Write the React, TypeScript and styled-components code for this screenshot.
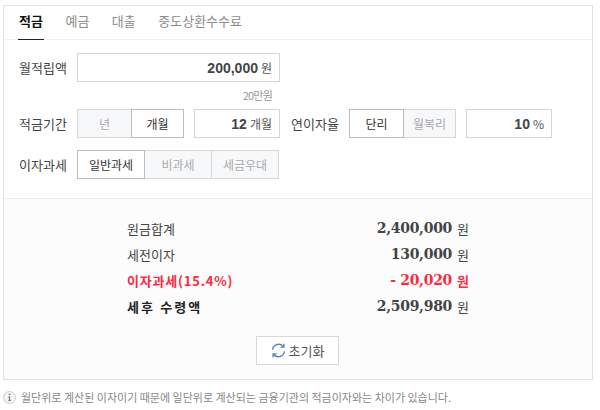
import styled, { createGlobalStyle } from 'styled-components';

const GlobalStyle = createGlobalStyle`
    html, body {
        margin: 0;
        padding: 0;
        background: #fff;
    }
    body {
        font-family: "Noto Sans CJK KR", "Noto Sans", sans-serif;
        color: #333;
    }
`;

const Page = styled.div`
    width: 600px;
    height: 410px;
    padding: 5px 0 0 3px;
    box-sizing: border-box;
    overflow: hidden;
`;

const Panel = styled.div`
    width: 590px;
    height: 375px;
    box-sizing: border-box;
    border: 1px solid #e2e2e2;
    display: flex;
    flex-direction: column;
`;

const Tabs = styled.div`
    height: 34px;
    box-sizing: border-box;
    padding-left: 14px;
    display: flex;
    gap: 20.5px;
    border-bottom: 1px solid #f0f0f0;
`;

const Tab = styled.div<{ $active?: boolean }>`
    height: 34px;
    box-sizing: border-box;
    padding: 0 1px;
    font-size: 13px;
    line-height: 30px;
    font-weight: ${(p) => (p.$active ? 700 : 400)};
    color: ${(p) => (p.$active ? '#111' : '#8c8c8c')};
    border-bottom: 1px solid ${(p) => (p.$active ? '#222' : 'transparent')};
`;

const Form = styled.div`
    height: 159px;
    box-sizing: border-box;
    padding: 13px 0 0 15px;
    border-bottom: 1px solid #eee;
`;

const Row = styled.div`
    display: flex;
    align-items: center;
    height: 29px;
`;

const Hint = styled.div`
    width: 254px;
    height: 27px;
    box-sizing: border-box;
    padding: 5px 1px 0 0;
    text-align: right;
    font-size: 11px;
    line-height: 16px;
    letter-spacing: -0.8px;
    color: #999;
`;

const Label = styled.div<{ $width?: number; $gap?: number }>`
    width: ${(p) => p.$width ?? 58}px;
    margin-left: ${(p) => p.$gap ?? 0}px;
    flex: none;
    font-size: 13px;
    color: #444;
`;

const Field = styled.div<{ $width: number; $gap?: number }>`
    width: ${(p) => p.$width}px;
    height: 29px;
    margin-left: ${(p) => p.$gap ?? 0}px;
    flex: none;
    box-sizing: border-box;
    border: 1px solid #d5d5d5;
    display: flex;
    align-items: center;
    justify-content: flex-end;
    gap: 3px;
    padding-right: 7px;
    font-size: 12px;
    color: #555;
`;

const Value = styled.b`
    font-family: "Liberation Sans", Arial, sans-serif;
    font-size: 14px;
    color: #444;
`;

const Option = styled.div<{ $width: number; $on?: boolean }>`
    width: ${(p) => p.$width}px;
    height: 29px;
    flex: none;
    box-sizing: border-box;
    margin-right: -1px;
    position: relative;
    z-index: ${(p) => (p.$on ? 1 : 0)};
    border: 1px solid ${(p) => (p.$on ? '#bcbcbc' : '#d8d8d8')};
    background: ${(p) => (p.$on ? '#fff' : '#f7f8fa')};
    color: ${(p) => (p.$on ? '#333' : '#aaa')};
    font-size: 12px;
    line-height: 27px;
    text-align: center;
`;

const Spacer = styled.div<{ $height: number }>`
    height: ${(p) => p.$height}px;
`;

const Results = styled.div`
    flex: 1;
    background: #fcfcfc;
    padding: 16px 0 0 123px;
`;

const ResultRow = styled.div<{ $tone?: 'red' | 'strong' }>`
    width: 342px;
    height: 26px;
    display: flex;
    align-items: center;
    justify-content: space-between;
    font-size: 13px;
    letter-spacing: ${(p) => (p.$tone === 'strong' ? '2.1px' : p.$tone === 'red' ? '0.8px' : '0')};
    font-weight: ${(p) => (p.$tone ? 700 : 400)};
    color: ${(p) => (p.$tone === 'red' ? '#ff2a3c' : p.$tone === 'strong' ? '#222' : '#444')};
`;

const Amount = styled.span<{ $red?: boolean }>`
    display: flex;
    align-items: center;
    gap: 5px;
    letter-spacing: 0;
    font-weight: ${(p) => (p.$red ? 700 : 400)};
    color: ${(p) => (p.$red ? '#ff2a3c' : '#444')};
`;

const Money = styled.b`
    font-family: "DejaVu Serif", "Liberation Serif", serif;
    font-size: 14px;
    letter-spacing: -0.3px;
`;

const ResetWrap = styled.div`
    width: 342px;
    display: flex;
    justify-content: center;
    padding-top: 17px;
`;

const ResetButton = styled.button`
    width: 83px;
    height: 29px;
    margin-left: -1px;
    box-sizing: border-box;
    border: 1px solid #d8d8d8;
    background: #fff;
    padding: 0;
    display: flex;
    align-items: center;
    justify-content: center;
    gap: 3px;
    font-family: inherit;
    font-size: 13px;
    color: #555;
`;

const Note = styled.div`
    display: flex;
    align-items: center;
    gap: 5px;
    margin-top: 9px;
    font-size: 11px;
    line-height: 16px;
    color: #888;
`;

const RefreshIcon = () => (
    <svg width="15" height="15" viewBox="0 0 15 15" fill="none" stroke="#4a78cc" strokeWidth="1.3">
        <path d="M1.6 6.8A6 6 0 0 1 12 3.2" />
        <path d="M13.4 8.2A6 6 0 0 1 3 11.8" />
        <path d="M12.9 0.8V4.2H9.5" />
        <path d="M2.1 14.2V10.8H5.5" />
    </svg>
);

const InfoIcon = () => (
    <svg width="13" height="13" viewBox="0 0 13 13">
        <circle cx="6.5" cy="6.5" r="6" fill="#f4f4f4" stroke="#ccc" />
        <rect x="5.8" y="2.6" width="1.5" height="1.5" fill="#777" />
        <path d="M5 5.4H7.2V9.2H8.1V10H5V9.2H5.9V6.2H5Z" fill="#777" />
    </svg>
);

export default function App() {
    return (
        <Page>
            <GlobalStyle />
            <Panel>
                <Tabs>
                    <Tab $active>적금</Tab>
                    <Tab>예금</Tab>
                    <Tab>대출</Tab>
                    <Tab>중도상환수수료</Tab>
                </Tabs>
                <Form>
                    <Row>
                        <Label>월적립액</Label>
                        <Field $width={203}>
                            <Value>200,000</Value> 원
                        </Field>
                    </Row>
                    <Hint>20만원</Hint>
                    <Row>
                        <Label>적금기간</Label>
                        <Option $width={55}>년</Option>
                        <Option $width={53} $on>
                            개월
                        </Option>
                        <Field $width={86} $gap={11}>
                            <Value>12</Value>개월
                        </Field>
                        <Label $gap={11}>연이자율</Label>
                        <Option $width={55} $on>
                            단리
                        </Option>
                        <Option $width={53}>월복리</Option>
                        <Field $width={86} $gap={11}>
                            <Value>10</Value>%
                        </Field>
                    </Row>
                    <Spacer $height={12} />
                    <Row>
                        <Label>이자과세</Label>
                        <Option $width={68} $on>
                            일반과세
                        </Option>
                        <Option $width={68}>비과세</Option>
                        <Option $width={68}>세금우대</Option>
                    </Row>
                </Form>
                <Results>
                    <ResultRow>
                        원금합계
                        <Amount>
                            <Money>2,400,000</Money> 원
                        </Amount>
                    </ResultRow>
                    <ResultRow>
                        세전이자
                        <Amount>
                            <Money>130,000</Money> 원
                        </Amount>
                    </ResultRow>
                    <ResultRow $tone="red">
                        이자과세(15.4%)
                        <Amount $red>
                            <Money>- 20,020</Money> 원
                        </Amount>
                    </ResultRow>
                    <ResultRow $tone="strong">
                        세후 수령액
                        <Amount>
                            <Money>2,509,980</Money> 원
                        </Amount>
                    </ResultRow>
                    <ResetWrap>
                        <ResetButton>
                            <RefreshIcon />
                            초기화
                        </ResetButton>
                    </ResetWrap>
                </Results>
            </Panel>
            <Note>
                <InfoIcon />
                월단위로 계산된 이자이기 때문에 일단위로 계산되는 금융기관의 적금이자와는 차이가 있습니다.
            </Note>
        </Page>
    );
}
